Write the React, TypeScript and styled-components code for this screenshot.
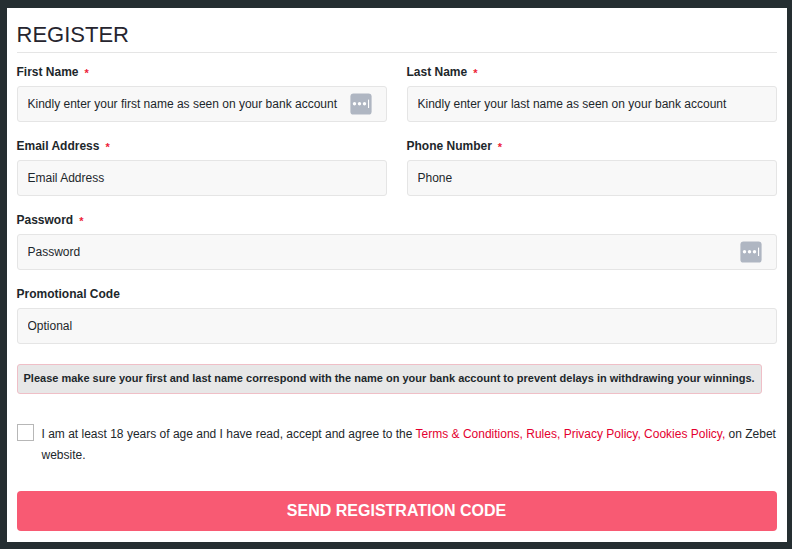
import React from "react";
import styled, { createGlobalStyle } from "styled-components";

const GlobalStyle = createGlobalStyle`
  * { box-sizing: border-box; }
  body {
    margin: 0;
    background: #252e31;
    color: #1d272b;
    font-family: "Liberation Sans", Arial, Helvetica, sans-serif;
    font-size: 12px;
  }
`;

const Page = styled.div`
  height: 549px;
  padding: 8px 5px 7px 7px;
  overflow: hidden;
`;

const Panel = styled.form`
  height: 534px;
  padding: 8px 10px 11px;
  background: #fff;
  display: flex;
  flex-direction: column;
`;

const Title = styled.h1`
  margin: 0 0 10px;
  height: 37px;
  border-bottom: 1px solid #e5e5e5;
  color: #26252f;
  font-size: 22px;
  font-weight: 400;
  line-height: 37px;
  text-indent: -0.5px;
`;

const Fields = styled.div`
  display: grid;
  grid-template-columns: 1fr 1fr;
  column-gap: 20px;
  row-gap: 15px;
`;

const Field = styled.label<{ $wide?: boolean }>`
  display: flex;
  flex-direction: column;
  grid-column: ${(p) => (p.$wide ? "1 / -1" : "auto")};
`;

const Caption = styled.span`
  display: flex;
  height: 23px;
  margin-left: -0.5px;
  line-height: 18px;
  font-weight: 700;
  white-space: nowrap;
`;

const Required = styled.span`
  margin-left: 6px;
  color: #ed1c38;
  font-size: 11px;
  line-height: 21px;
`;

const InputBox = styled.span`
  display: flex;
  align-items: center;
  height: 36px;
  padding: 0 14px 0 9.5px;
  border: 1px solid #e5e5e5;
  border-radius: 3px;
  background: #f8f8f8;
`;

const Input = styled.input`
  flex: 1;
  min-width: 0;
  height: 34px;
  padding: 0;
  border: 0;
  outline: 0;
  background: transparent;
  color: #1d272b;
  font: inherit;
  &::placeholder { color: #1d272b; opacity: 1; }
`;

const Notice = styled.p`
  align-self: flex-start;
  width: 745px;
  height: 30px;
  margin: 20px 0 30px;
  padding: 0 5.5px;
  border: 1px solid #efbfc7;
  border-radius: 3px;
  background: #e7e7e7;
  font-size: 11px;
  font-weight: 700;
  line-height: 26px;
  white-space: nowrap;
`;

const Consent = styled.label`
  display: flex;
  height: 67px;
`;

const Checkbox = styled.input`
  appearance: none;
  flex: none;
  width: 17px;
  height: 17px;
  margin: 0 7.5px 0 0;
  border: 1px solid #b7b7b7;
  background: #fff;
`;

const Terms = styled.span`
  line-height: 21px;
  white-space: nowrap;
`;

const Link = styled.a`
  color: #e4002f;
`;

const Submit = styled.button`
  height: 40px;
  padding: 0 1px 0 0;
  border: 0;
  border-radius: 4px;
  background: #f85a73;
  color: #fff;
  font: 700 16px/40px "Liberation Sans", Arial, sans-serif;
`;

const Badge = styled.svg`
  display: block;
  flex: none;
  width: 22px;
  height: 22px;
`;

const PasswordManagerIcon = () => (
  <Badge viewBox="0 0 22 22">
    <rect x="0.4" y="0.4" width="21.2" height="21.2" rx="3.2" fill="#afb6c2" />
    <circle cx="4.5" cy="10.8" r="1.7" fill="#fff" />
    <circle cx="9.5" cy="10.8" r="1.7" fill="#fff" />
    <circle cx="14.5" cy="10.8" r="1.7" fill="#fff" />
    <rect x="18" y="6.6" width="1.1" height="8.4" fill="#fff" />
  </Badge>
);

type FieldSpec = {
  label: string;
  hint: string;
  required?: boolean;
  wide?: boolean;
  manager?: boolean;
};

const fields: FieldSpec[] = [
  { label: "First Name", hint: "Kindly enter your first name as seen on your bank account", required: true, manager: true },
  { label: "Last Name", hint: "Kindly enter your last name as seen on your bank account", required: true },
  { label: "Email Address", hint: "Email Address", required: true },
  { label: "Phone Number", hint: "Phone", required: true },
  { label: "Password", hint: "Password", required: true, wide: true, manager: true },
  { label: "Promotional Code", hint: "Optional", wide: true },
];

export default function App() {
  return (
    <Page>
      <GlobalStyle />
      <Panel>
        <Title>REGISTER</Title>
        <Fields>
          {fields.map((f) => (
            <Field key={f.label} $wide={f.wide}>
              <Caption>
                {f.label}
                {f.required && <Required>*</Required>}
              </Caption>
              <InputBox>
                <Input placeholder={f.hint} />
                {f.manager && <PasswordManagerIcon />}
              </InputBox>
            </Field>
          ))}
        </Fields>
        <Notice>
          Please make sure your first and last name correspond with the name on your bank account to prevent delays in withdrawing your winnings.
        </Notice>
        <Consent>
          <Checkbox type="checkbox" />
          <Terms>
            I am at least 18 years of age and I have read, accept and agree to the{" "}
            <Link>Terms &amp; Conditions,</Link> <Link>Rules,</Link> <Link>Privacy Policy,</Link>{" "}
            <Link>Cookies Policy,</Link> on Zebet
            <br />
            website.
          </Terms>
        </Consent>
        <Submit type="button">SEND REGISTRATION CODE</Submit>
      </Panel>
    </Page>
  );
}
